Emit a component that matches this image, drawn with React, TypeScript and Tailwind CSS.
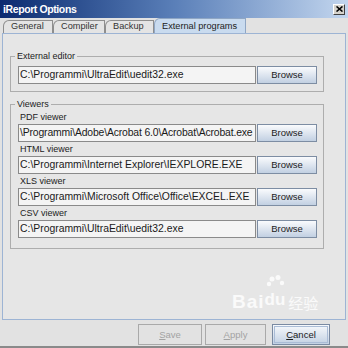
const font = "font-['Liberation_Sans',Arial,sans-serif]";

function Tab({ label, width, selected }: { label: string; width: string; selected?: boolean }) {
  return (
    <div
      className={`${width} flex items-end pl-[7px] rounded-tl-[6px] border border-b-0 text-[9.2px] leading-[12px] pb-[1px] ${
        selected
          ? "h-[15px] bg-[#c9dbef] border-[#8fa6c4] text-[#222]"
          : "h-[13px] bg-[#e4e4e4] border-[#8e8e8e] text-[#333]"
      }`}
    >
      {label}
    </div>
  );
}

function BrowseButton() {
  return (
    <button className="w-[60px] h-[18px] shrink-0 border border-[#7d8da3] bg-gradient-to-b from-[#fafbfd] to-[#c2d0e2] text-[9.5px] leading-[16px] text-[#1c1c1c] text-center">
      Browse
    </button>
  );
}

function PathField({ value, tight }: { value: string; tight?: boolean }) {
  return (
    <div
      className={`flex-1 min-w-0 h-[18px] border border-[#8a8a8a] bg-[#f4f4f4] text-[10.4px] leading-[16px] text-[#1a1a1a] pl-[1px] overflow-hidden whitespace-nowrap ${
        tight ? "tracking-[-0.15px]" : ""
      }`}
    >
      {value}
    </div>
  );
}

function Group({ title, children, className }: { title: string; children: React.ReactNode; className?: string }) {
  return (
    <fieldset className={`border border-[#adadad] w-[314px] min-w-0 ${className ?? ""}`}>
      <legend className="ml-[4px] px-[2px] text-[9px] leading-[12px] text-[#222]">{title}</legend>
      {children}
    </fieldset>
  );
}

const viewers = [
  { label: "PDF viewer", path: "\\Programmi\\Adobe\\Acrobat 6.0\\Acrobat\\Acrobat.exe", tight: true },
  { label: "HTML viewer", path: "C:\\Programmi\\Internet Explorer\\IEXPLORE.EXE" },
  { label: "XLS viewer", path: "C:\\Programmi\\Microsoft Office\\Office\\EXCEL.EXE" },
  { label: "CSV viewer", path: "C:\\Programmi\\UltraEdit\\uedit32.exe" },
];

function DialogButton({ label, width, disabled, focused }: { label: string; width: string; disabled?: boolean; focused?: boolean }) {
  return (
    <button
      className={`${width} h-[21px] text-[9.5px] leading-[19px] text-center border ${
        disabled
          ? "border-[#a9a9a9] bg-[#e2e2e2] text-[#a2a2a2]"
          : "border-[#7a8aa2] bg-gradient-to-b from-[#f7f9fc] to-[#c3d1e3] text-[#1a1a1a]"
      } ${focused ? "outline outline-1 outline-[#aabcd6] outline-offset-[-3px]" : ""}`}
    >
      <span className="underline">{label[0]}</span>
      {label.slice(1)}
    </button>
  );
}

export default function App() {
  return (
    <div className={`${font} relative w-[348px] h-[348px] bg-[#e2e2e2] flex flex-col overflow-hidden`}>
      {/* title bar */}
      <div className="h-[18px] shrink-0 flex items-center justify-between pl-[3px] pr-[3px] bg-gradient-to-r from-[#0c2a70] via-[#5a7fb8] to-[#c3d6ee]">
        <span className="text-white font-bold text-[10.5px] tracking-[-0.4px] leading-[12px]">iReport Options</span>
        <div className="w-[12px] h-[11px] bg-[#d6d3cc] border border-t-white border-l-white border-b-[#404040] border-r-[#404040] flex items-center justify-center">
          <svg width="7" height="6" viewBox="0 0 7 6">
            <path d="M0.5 0.5 L6.5 5.5 M6.5 0.5 L0.5 5.5" stroke="#000" strokeWidth="1.6" />
          </svg>
        </div>
      </div>

      {/* tabs */}
      <div className="h-[15px] shrink-0 flex items-end pl-[3px]">
        <Tab label="General" width="w-[50px]" />
        <Tab label="Compiler" width="w-[52px]" />
        <Tab label="Backup" width="w-[49px]" />
        <Tab label="External programs" width="w-[92px]" selected />
      </div>

      {/* panel */}
      <div className="mx-[2px] h-[287px] shrink-0 border border-[#9db4d4] bg-[#e6e6e6] pl-[7px] pt-[16px]">
        <Group title="External editor">
          <div className="flex gap-[1px] pt-[4px] pl-[7px] pr-[6px] pb-[7px]">
            <PathField value="C:\Programmi\UltraEdit\uedit32.exe" />
            <BrowseButton />
          </div>
        </Group>

        <Group title="Viewers" className="mt-[6px]">
          <div className="pt-[1px] pl-[6px] pr-[6px] pb-[9px]">
            {viewers.map((v) => (
              <div key={v.label} className="mb-[1px]">
                <div className="h-[13px] pl-[3px] text-[9px] leading-[13px] text-[#222]">{v.label}</div>
                <div className="flex gap-[1px] pl-[1px]">
                  <PathField value={v.path} tight={v.tight} />
                  <BrowseButton />
                </div>
              </div>
            ))}
          </div>
        </Group>
      </div>

      {/* bottom buttons */}
      <div className="flex-1 flex justify-end items-start pt-[4px] pr-[18px]">
        <DialogButton label="Save" width="w-[64px]" disabled />
        <div className="w-[3px]" />
        <DialogButton label="Apply" width="w-[61px]" disabled />
        <div className="w-[6px]" />
        <DialogButton label="Cancel" width="w-[58px]" focused />
      </div>
      <div className="h-[2px] shrink-0 bg-[#8a8a8a]" />

      {/* watermark */}
      <div className="absolute left-[232px] top-[288px] flex items-end text-white/80 pointer-events-none">
        <span className="text-[19px] font-bold leading-[20px] tracking-[1px]">Bai</span>
        <div className="relative">
          <svg width="24" height="24" viewBox="0 0 24 24" className="absolute left-[0px] top-[-14px]">
            <circle cx="7" cy="5" r="2.5" fill="white" fillOpacity="0.8" />
            <circle cx="13" cy="3.5" r="2.5" fill="white" fillOpacity="0.8" />
            <circle cx="4" cy="10" r="2.2" fill="white" fillOpacity="0.8" />
            <circle cx="17" cy="9" r="2.2" fill="white" fillOpacity="0.8" />
          </svg>
          <span className="text-[17px] font-bold leading-[20px]">du</span>
        </div>
        <span className="ml-[3px] text-[15px] leading-[18px] font-['Noto_Sans_CJK_SC',sans-serif]">经验</span>
      </div>
    </div>
  );
}
